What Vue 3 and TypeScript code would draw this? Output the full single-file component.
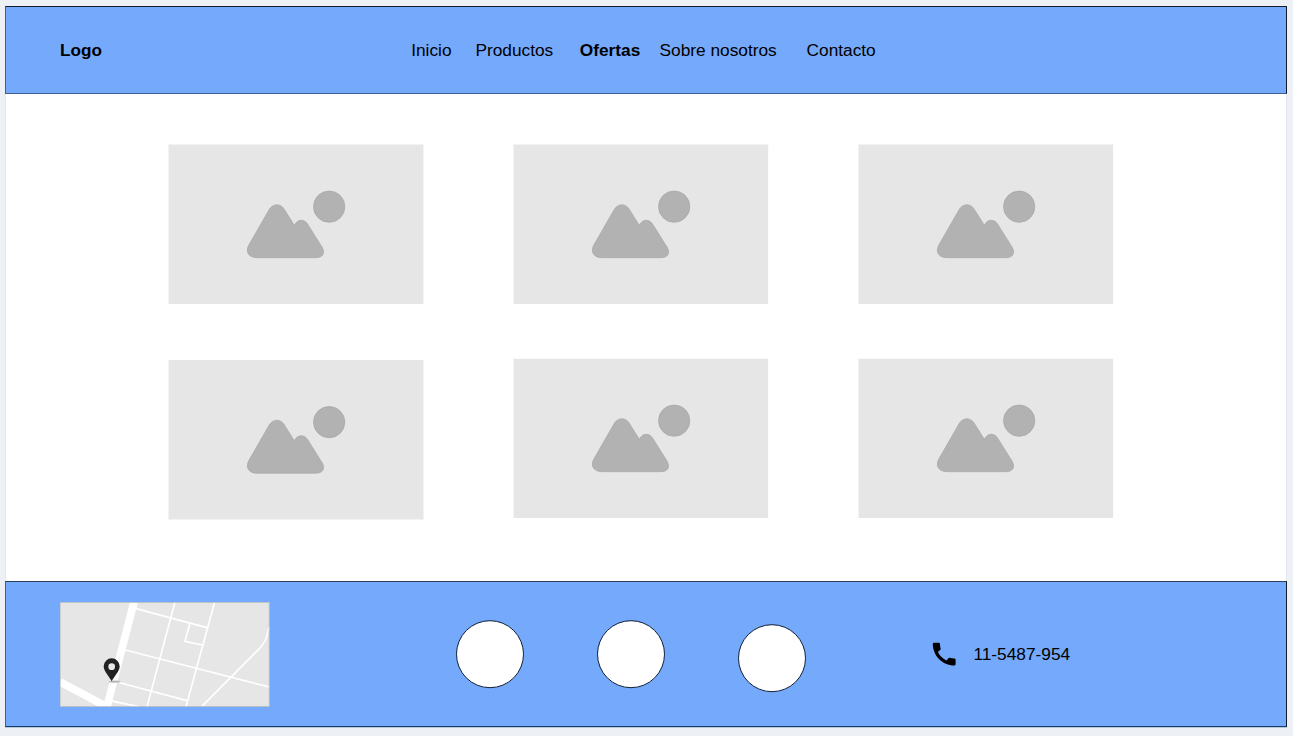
<script setup lang="ts">
interface NavLink {
  label: string
  key: string
  active?: boolean
}

const links: NavLink[] = [
  { label: 'Inicio', key: 'inicio' },
  { label: 'Productos', key: 'productos' },
  { label: 'Ofertas', key: 'ofertas', active: true },
  { label: 'Sobre nosotros', key: 'nosotros' },
  { label: 'Contacto', key: 'contacto' },
]

const products: number[] = [1, 2, 3, 4, 5, 6]
const socials: number[] = [1, 2, 3]
</script>

<template>
  <div class="page">
    <header class="bar header">
      <strong class="logo">Logo</strong>
      <nav class="nav">
        <a v-for="link in links" :key="link.key" :class="{ active: link.active }">{{ link.label }}</a>
      </nav>
    </header>

    <main class="gallery">
      <div v-for="product in products" :key="product" class="card" :class="'card-' + product">
        <svg viewBox="24 24 768 480" width="256" height="160">
          <g fill="#b2b2b2" stroke="#a5a5a5" stroke-width="2">
            <path d="M266 328L325 225C337 200 364 200 376 225L403 268C412 248 434 248 444 266L486 333C497 352 488 365 468 365H291C265 365 256 347 266 328Z" />
            <circle cx="507.500" cy="212" r="47" />
          </g>
        </svg>
      </div>
    </main>

    <footer class="bar footer">
      <svg class="map" viewBox="30 36 630 315" width="210" height="105">
        <rect x="30" y="36" width="628" height="314" fill="#e6e6e6" />
        <g fill="none" stroke="#fff" stroke-width="5">
          <path d="M255 55L471 113M226 180L658 291M190 273L411 332M180 332L265 350" />
          <path d="M375 36L291 350M494 36L408 350M419 101L405 154L457 165" />
          <path d="M657 112C650 145 646 158 625 179L455 350" />
        </g>
        <path d="M252 36L171 350" fill="none" stroke="#fff" stroke-width="23" />
        <path d="M30 276L170 350" fill="none" stroke="#fff" stroke-width="23" />
        <ellipse cx="194" cy="275" rx="18" ry="3.500" fill="#b9b9b9" />
        <path d="M185 274C178 260 161 244 161 229A24 24 0 0 1 209 229C209 244 192 260 185 274Z" fill="#222" />
        <circle cx="185" cy="230" r="10" fill="#e8e8e8" />
        <rect x="30.500" y="37.500" width="627" height="312" fill="none" stroke="#b9bec2" stroke-width="2.500" />
      </svg>
      <div class="socials">
        <svg v-for="social in socials" :key="social" class="social" viewBox="0 0 69 69" width="69" height="69">
          <circle cx="34" cy="34.200" r="33.500" fill="#fff" stroke="#102038" stroke-width="1" />
        </svg>
      </div>
      <div class="phone">
        <svg viewBox="0 0 24 24" width="30.400" height="30.400">
          <path d="M20.010 15.380c-1.230 0-2.420-.200-3.530-.560a.977.977 0 0 0-1.010.240l-1.570 1.970c-2.830-1.350-5.480-3.900-6.890-6.830l1.950-1.660c.270-.280.350-.670.240-1.020-.370-1.110-.560-2.300-.560-3.530 0-.540-.450-.990-.990-.990H4.190C3.650 3 3 3.240 3 3.990 3 13.280 10.730 21 20.010 21c.710 0 .990-.630.990-1.180v-3.450c0-.540-.450-.990-.990-.990z" />
        </svg>
        <span>11-5487-954</span>
      </div>
    </footer>
  </div>
</template>

<style>
body {
  background: #edf1f6;
}
</style>

<style scoped>
.page {
  box-sizing: border-box;
  width: 1293px;
  height: 736px;
  padding: 6px 6px 9px 5px;
  overflow: hidden;
  display: flex;
  flex-direction: column;
  background: #edf1f6;
  color: #000;
  font: 17.3px/20px "Liberation Sans", Arial, sans-serif;
}

.bar {
  box-sizing: border-box;
  flex: none;
  display: flex;
  background: #75a9fc;
  border: 1px solid #101c2c;
  border-left-color: #40618f;
}

.header {
  height: 88px;
  align-items: center;
  padding-left: 54px;
  border-bottom-color: #40618f;
}

.logo {
  width: 351.2px;
  font-size: 17.2px;
}

.nav {
  display: grid;
  grid-template-columns: 64.2px 104.4px 79.8px 147px auto;
  white-space: nowrap;
}

.active {
  font-weight: 700;
}

.gallery {
  box-sizing: border-box;
  height: 487px;
  flex: none;
  display: grid;
  grid-template-columns: repeat(3, 256px);
  grid-auto-rows: 160px;
  column-gap: 89px;
  row-gap: 54px;
  padding: 50px 0 0 162px;
  background: #fff;
  border: solid #e4e8ec;
  border-width: 0 1px;
}

.card {
  box-sizing: border-box;
  height: 160px;
  background: #e6e6e6;
  box-shadow: inset 1px 1px #f3f3f3, inset -1px 0 #fcfcfc;
}

.card svg,
.map,
.social {
  display: block;
  flex: none;
}

.card-1 {
  box-shadow: inset 1px 1px #f3f3f3, inset -1px 0 #f5f5f5;
}

.card-4 {
  margin-top: 2px;
  box-shadow: inset 1px 0 #f3f3f3, inset -1px -1px #f3f3f3;
}

.card-4 svg {
  transform: translateY(-0.5px);
}

.card-5,
.card-6 {
  box-shadow: inset 1px 0 #f3f3f3, inset -1px 0 #fcfcfc, inset 0 1px #fafafa;
}

.footer {
  height: 146px;
  align-items: flex-start;
  border-top-color: #2b4058;
  border-bottom-color: #123f6b;
  box-shadow: 0 1px #b9c6d4;
}

.map {
  margin: 20px 0 0 54px;
}

.socials {
  display: flex;
  gap: 72px;
  margin: 38px 0 0 186px;
}

.social:last-child {
  margin: 3.5px 0 0 -0.5px;
}

.phone {
  display: flex;
  align-items: center;
  gap: 14px;
  margin: 57.3px 0 0 122.5px;
}
</style>
